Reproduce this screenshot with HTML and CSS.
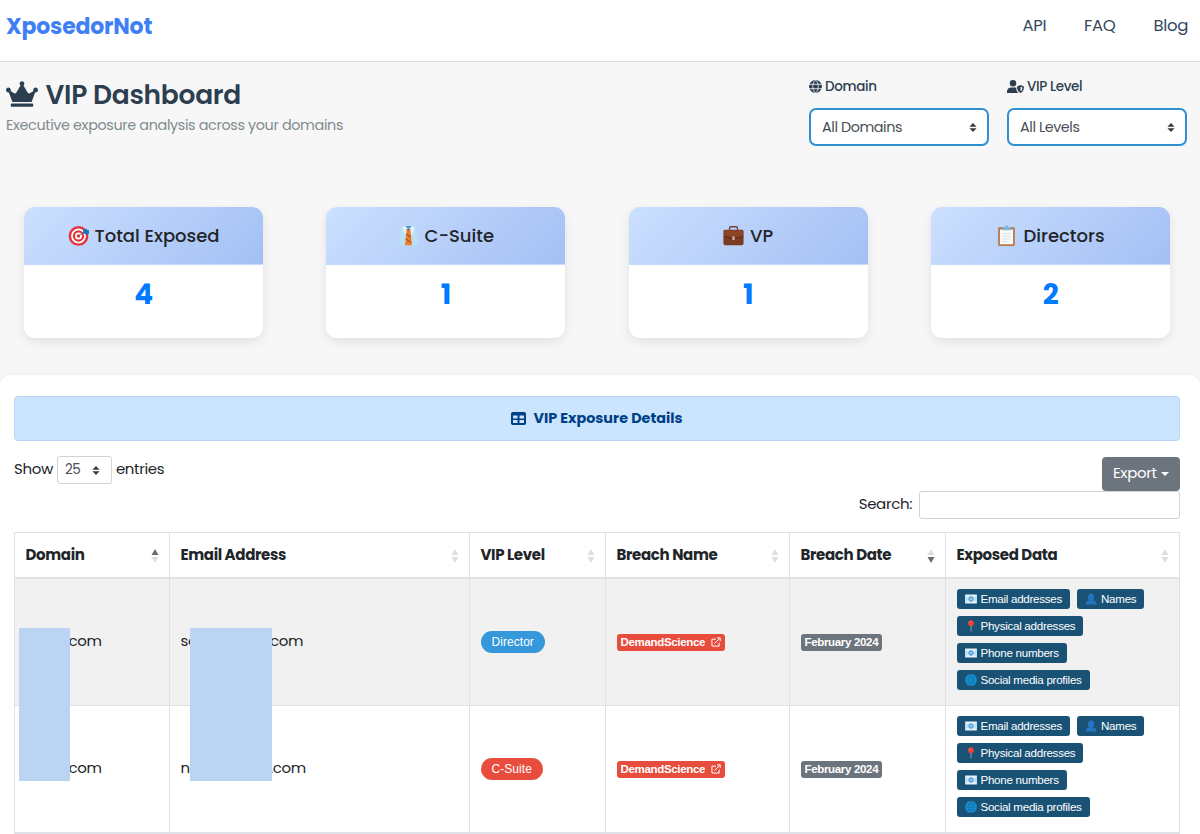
FILE: index.html
```html
<!DOCTYPE html>
<html lang="en">
<head>
<meta charset="utf-8">
<title>VIP Dashboard</title>
<link rel="stylesheet" href="styles.css">
</head>
<body>
<svg class="defs" width="0" height="0">
  <symbol id="mail" viewBox="0 0 24 20">
    <rect x="0" y="1" width="24" height="18" rx="1.5" fill="#e6f2fa"/>
    <path d="M0 1l8 9-8 9zM24 1l-8 9 8 9z" fill="#c3e0f3"/>
    <circle cx="12" cy="10" r="4" fill="none" stroke="#4f9fdb" stroke-width="2.600"/>
    <path d="M9 10h6" stroke="#4f9fdb" stroke-width="2"/>
  </symbol>
  <symbol id="person" viewBox="0 0 24 24">
    <ellipse cx="12" cy="8.500" rx="6" ry="7.500" fill="#2474c4"/>
    <path d="M1 23c0-6 4-7.500 8-8h6c4 .5 8 2 8 8z" fill="#2474c4"/>
  </symbol>
  <symbol id="pin" viewBox="0 0 24 24">
    <path d="M11 11h2l-.4 12h-1.200z" fill="#9bb0bd"/>
    <circle cx="12" cy="6.500" r="5.800" fill="#e8403a"/>
    <circle cx="10.200" cy="4.500" r="1.500" fill="#ff8a80"/>
  </symbol>
  <symbol id="world" viewBox="0 0 24 24">
    <circle cx="12" cy="12" r="11.800" fill="#1a93d8"/>
    <path d="M12 .5v23M.5 12h23M3 6.500h18M3 17.500h18M12 .5C4.500 6 4.500 18 12 23.500 19.500 18 19.500 6 12 .5" fill="none" stroke="#11699f" stroke-width="1.200"/>
  </symbol>
  <symbol id="external" viewBox="0 0 16 16">
    <path d="M8 3.500H1.500v11H13V9M5.500 10.500L14 2M9.500 1.300h5.200v5.200" fill="none" stroke="#fff" stroke-width="1.600"/>
  </symbol>
  <symbol id="updown" viewBox="0 0 8 10">
    <path d="M4 0l4 4.200H0zM4 10L0 5.800h8z" fill="#343a40"/>
  </symbol>
  <symbol id="sort" viewBox="0 0 8 14">
    <path class="up" d="M4 0l3.500 6h-7z"/>
    <path class="down" d="M4 14L.5 8h7z"/>
  </symbol>
</svg>

<header class="topbar">
  <a class="brand">XposedorNot</a>
  <nav class="nav"><a>API</a><a>FAQ</a><a>Blog</a></nav>
</header>

<section class="hero">
  <div class="heading">
    <h1 class="title">
      <svg class="crown" viewBox="0 0 640 512"><path fill="currentColor" d="M528 448H112c-8.800 0-16 7.200-16 16v32c0 8.800 7.200 16 16 16h416c8.800 0 16-7.200 16-16v-32c0-8.800-7.200-16-16-16zm64-320c-26.500 0-48 21.500-48 48 0 7.100 1.600 13.700 4.400 19.800L476 239.200c-15.400 9.200-35.300 4-44.200-11.600L350.300 85C361 76.200 368 63 368 48c0-26.500-21.500-48-48-48s-48 21.500-48 48c0 15 7 28.200 17.700 37l-81.500 142.600c-8.900 15.600-28.900 20.800-44.200 11.600l-72.300-43.400c2.700-6 4.400-12.700 4.400-19.800 0-26.500-21.500-48-48-48S0 149.500 0 176s21.500 48 48 48c2.600 0 5.200-.4 7.700-.8L128 416h384l72.300-192.800c2.500.4 5.100.8 7.700.8 26.500 0 48-21.500 48-48s-21.500-48-48-48z"/></svg>
      <span>VIP Dashboard</span>
    </h1>
    <p class="subtitle">Executive exposure analysis across your domains</p>
  </div>
  <div class="filters">
    <div class="filter">
      <label class="filter-label">
        <svg width="13" height="13" viewBox="0 0 16 16"><circle cx="8" cy="8" r="8" fill="#2c3e50"/><path d="M0 5.300h16M0 10.700h16M8 0C3.500 4 3.500 12 8 16 12.500 12 12.500 4 8 0" fill="none" stroke="#f7f7f7" stroke-width="1"/></svg>
        <span>Domain</span>
      </label>
      <div class="select"><span>All Domains</span><svg width="8" height="9"><use href="#updown"/></svg></div>
    </div>
    <div class="filter">
      <label class="filter-label">
        <svg width="17" height="13" viewBox="0 0 34 26"><circle cx="12" cy="6.500" r="6.500" fill="#2c3e50"/><path d="M0 26v-3c0-5 4-8 8-8h8c1 0 1.700.1 2.500.3 0 4.500 1 8 4 10.700z" fill="#2c3e50"/><path d="M27 10l7 2.800c0 6.500-2 10.800-7 13.200-5-2.400-7-6.700-7-13.200z" fill="#2c3e50"/><path d="M27 13.500v9.300c2.700-1.500 4-4 4.200-7.600z" fill="#f7f7f7"/></svg>
        <span>VIP Level</span>
      </label>
      <div class="select"><span>All Levels</span><svg width="8" height="9"><use href="#updown"/></svg></div>
    </div>
  </div>
</section>

<section class="stats">
  <article class="stat">
    <h2 class="stat-head">
      <svg width="21" height="21" viewBox="0 0 24 24"><circle cx="12" cy="12.500" r="11.300" fill="#e5323b"/><circle cx="12" cy="12.500" r="8.500" fill="#fff"/><circle cx="12" cy="12.500" r="6.500" fill="#e5323b"/><circle cx="12" cy="12.500" r="4" fill="#fff"/><circle cx="12" cy="12.500" r="2" fill="#e5323b"/><path d="M12 12.500l7-5" stroke="#5b6670" stroke-width="1"/><path d="M17 9l.5-4 3.500-1 .5 1.500L24 6v4l-3 1z" fill="#1976b8"/></svg>
      <span>Total Exposed</span>
    </h2>
    <div class="stat-value">4</div>
  </article>
  <article class="stat">
    <h2 class="stat-head">
      <svg width="21" height="21" viewBox="0 0 24 24"><path d="M3 3l6-2h6l6 2 2 20H1z" fill="#b9e0f5"/><path d="M8 1l4 5-4 5-3-8zM16 1l-4 5 4 5 3-8z" fill="#e3f4fd"/><path d="M8.500 1h7L12 5z" fill="#4a9bc4"/><path d="M10 5h4l.6 4.500L16 23H8l1.400-13.500z" fill="#ef7d24"/><path d="M9.300 10l5 4M9 16l6 4M10 5.500h4" stroke="#a34f38" stroke-width="1.200"/></svg>
      <span>C-Suite</span>
    </h2>
    <div class="stat-value">1</div>
  </article>
  <article class="stat">
    <h2 class="stat-head">
      <svg width="21" height="21" viewBox="0 0 24 24"><path d="M7.500 6V3.500Q7.500 2 9 2h6q1.500 0 1.500 1.500V6" fill="none" stroke="#6d4038" stroke-width="1.500"/><rect x=".5" y="5.500" width="23" height="17.500" rx="1.800" fill="#7c3a22"/><path d="M1 6h22v6.500L12 15 1 12.500z" fill="#8a4428"/><path d="M1 13l11 2.500L23 13" fill="none" stroke="#542719"/><rect x="10.800" y="13" width="2.400" height="4" rx=".5" fill="#d6c3b5"/></svg>
      <span>VP</span>
    </h2>
    <div class="stat-value">1</div>
  </article>
  <article class="stat">
    <h2 class="stat-head">
      <svg width="21" height="21" viewBox="0 0 24 24"><rect x="2.500" y="2.500" width="19" height="21.500" rx="1.300" fill="#bb7547"/><path d="M4.500 5h15v17h-15z" fill="#f8fafb"/><path d="M7 10h10M7 13h10M7 16h10M7 19h7" stroke="#d5dfe6"/><path d="M7 2.500h3a2 2 0 0 1 4 0h3V6H7z" fill="#7db8d8"/></svg>
      <span>Directors</span>
    </h2>
    <div class="stat-value">2</div>
  </article>
</section>

<main class="panel">
  <div class="banner">
    <svg width="15" height="13" viewBox="0 0 30 26"><rect width="30" height="26" rx="3.500" fill="#004085"/><path d="M4 7h9v6H4zM17 7h9v6h-9zM4 16h9v6H4zM17 16h9v6h-9z" fill="#cce5ff"/></svg>
    <span>VIP Exposure Details</span>
  </div>

  <div class="tools">
    <div class="length"><span>Show</span><div class="length-select"><span>25</span><svg width="8" height="9"><use href="#updown"/></svg></div><span>entries</span></div>
    <div class="actions">
      <button class="export"><span>Export</span><i class="caret"></i></button>
      <label class="search"><span>Search:</span><input type="text" class="search-input"></label>
    </div>
  </div>

  <div class="table-wrap">
    <table class="table">
      <colgroup><col class="c1"><col class="c2"><col class="c3"><col class="c4"><col class="c5"><col class="c6"></colgroup>
      <thead>
        <tr>
          <th><div class="th asc"><span>Domain</span><svg width="8" height="14"><use href="#sort"/></svg></div></th>
          <th><div class="th"><span>Email Address</span><svg width="8" height="14"><use href="#sort"/></svg></div></th>
          <th><div class="th"><span>VIP Level</span><svg width="8" height="14"><use href="#sort"/></svg></div></th>
          <th><div class="th"><span>Breach Name</span><svg width="8" height="14"><use href="#sort"/></svg></div></th>
          <th><div class="th desc"><span>Breach Date</span><svg width="8" height="14"><use href="#sort"/></svg></div></th>
          <th><div class="th"><span>Exposed Data</span><svg width="8" height="14"><use href="#sort"/></svg></div></th>
        </tr>
      </thead>
      <tbody>
        <tr class="odd">
          <td><span class="domain-tail">com</span></td>
          <td><div class="email"><span class="mail-start">se</span><span>com</span></div></td>
          <td><span class="pill blue">Director</span></td>
          <td><span class="badge red">DemandScience<svg width="10" height="10"><use href="#external"/></svg></span></td>
          <td><span class="badge grey">February 2024</span></td>
          <td><div class="tags">
            <span class="tag"><svg><use href="#mail"/></svg>Email addresses</span><span class="tag"><svg><use href="#person"/></svg>Names</span>
            <span class="tag"><svg><use href="#pin"/></svg>Physical addresses</span>
            <span class="tag"><svg><use href="#mail"/></svg>Phone numbers</span>
            <span class="tag"><svg><use href="#world"/></svg>Social media profiles</span>
          </div></td>
        </tr>
        <tr>
          <td><span class="domain-tail">com</span></td>
          <td><div class="email"><span class="mail-start">n</span><span>.com</span></div></td>
          <td><span class="pill crimson">C-Suite</span></td>
          <td><span class="badge red">DemandScience<svg width="10" height="10"><use href="#external"/></svg></span></td>
          <td><span class="badge grey">February 2024</span></td>
          <td><div class="tags">
            <span class="tag"><svg><use href="#mail"/></svg>Email addresses</span><span class="tag"><svg><use href="#person"/></svg>Names</span>
            <span class="tag"><svg><use href="#pin"/></svg>Physical addresses</span>
            <span class="tag"><svg><use href="#mail"/></svg>Phone numbers</span>
            <span class="tag"><svg><use href="#world"/></svg>Social media profiles</span>
          </div></td>
        </tr>
      </tbody>
    </table>
    <div class="mask mask-domain"></div>
    <div class="mask mask-email"></div>
  </div>
</main>
</body>
</html>
```
FILE: styles.css
```css
* { box-sizing: border-box; }
body {
  margin: 0;
  height: 834px;
  overflow: hidden;
  background: #f7f7f7;
  color: #212529;
  font-family: Poppins, Inter, "Open Sans", sans-serif;
  font-size: 15px;
  line-height: 1.5;
  letter-spacing: -.35px;
}
h1, h2, p { margin: 0; }
svg { display: block; flex: none; }
span { white-space: nowrap; }
.defs { position: absolute; }

.topbar {
  display: flex;
  justify-content: space-between;
  height: 61.500px;
  padding: 10px 12px 0 6px;
  background: #fff;
  border-bottom: 1.500px solid #dedede;
}
.brand { font-size: 22px; line-height: 33px; font-weight: 700; letter-spacing: -.2px; color: #3f7ff5; }
.nav { display: flex; gap: 38px; font-size: 16.500px; line-height: 32px; color: #34495e; }

.hero {
  display: flex;
  justify-content: space-between;
  height: 145.500px;
  padding: 15.500px 13px 0 6px;
  color: #2c3e50;
}
.title { display: flex; align-items: center; gap: 7.500px; height: 35px; font-size: 26.500px; font-weight: 600; letter-spacing: -.28px; }
.crown { width: 32px; height: 26px; margin-top: -2px; }
.subtitle { margin-top: 2px; font-size: 14.400px; line-height: 22px; letter-spacing: -.37px; color: #7f8c8d; }
.filters { display: flex; gap: 18px; }
.filter { width: 180px; }
.filter-label { display: flex; align-items: center; gap: 3px; height: 20px; font-size: 13.500px; font-weight: 500; }
.filter-label svg { margin-top: -2px; }
.select {
  display: flex;
  align-items: center;
  justify-content: space-between;
  height: 38px;
  margin-top: 11px;
  padding: 1px 10px 0 11px;
  background: #fff;
  border: 2px solid #2f8fd0;
  border-radius: 7px;
  color: #495057;
  font-size: 14.400px;
  letter-spacing: -.43px;
}

.stats { display: grid; grid-template-columns: repeat(4, 239px); justify-content: space-between; height: 168px; padding: 0 30px 0 24px; }
.stat { height: 131px; background: #fff; border-radius: 11px; overflow: hidden; box-shadow: 0 4px 11px rgba(0, 0, 0, .09); }
.stat-head {
  display: flex;
  align-items: center;
  justify-content: center;
  gap: 6px;
  height: 58px;
  background: linear-gradient(135deg, #cce0ff, #a3bff4);
  border-bottom: 1px solid #c4dcfb;
  font-size: 18px;
  font-weight: 500;
  letter-spacing: 0;
}
.stat-value { padding-top: 8px; text-align: center; font-size: 28px; line-height: 44px; font-weight: 700; color: #007bff; }

.panel { height: 470px; padding: 21px 20px 0 14px; background: #fff; border-radius: 11px; box-shadow: 0 0 5px rgba(0, 0, 0, .05); }
.banner {
  display: flex;
  align-items: center;
  justify-content: center;
  gap: 7px;
  height: 45px;
  background: #cce5ff;
  border: 1px solid #b8d5f5;
  border-radius: 4px;
  color: #004085;
  font-size: 14.400px;
  font-weight: 700;
  letter-spacing: 0;
}
.tools { display: flex; justify-content: space-between; height: 91px; padding-top: 15px; }
.length { display: flex; align-items: center; height: 28px; gap: 4px; }
.length > span { margin-top: -2px; }
.length-select {
  display: flex;
  align-items: center;
  justify-content: space-between;
  width: 55px;
  height: 28px;
  padding: 0 11px 0 7px;
  border: 1px solid #ced4da;
  border-radius: 3px;
  color: #495057;
  font-size: 13.500px;
}
.actions { display: flex; flex-direction: column; align-items: flex-end; padding-top: 1px; }
.export {
  display: flex;
  align-items: center;
  justify-content: space-between;
  width: 78px;
  height: 34px;
  padding: 0 11px 1px;
  border: 0;
  border-radius: 4px;
  background: #6c757d;
  color: #fff;
  font: inherit;
  letter-spacing: -.35px;
}
.caret { border: 4px solid transparent; border-top-color: #fff; border-bottom: 0; }
.search { display: flex; align-items: center; gap: 7px; height: 28px; }
.search span { margin-top: -2px; }
.search-input { width: 261px; height: 28px; border: 1px solid #ced4da; border-radius: 3px; background: #fff; }

.table-wrap { position: relative; }
.table { width: 1165px; table-layout: fixed; border-collapse: collapse; }
.c1 { width: 155px; } .c2 { width: 300px; } .c3 { width: 136px; }
.c4 { width: 184px; } .c5 { width: 156px; } .c6 { width: 234px; }
th, td { border: 1px solid #dee2e6; padding: 0 10.500px; text-align: left; }
th { height: 45px; border-bottom-width: 2px; }
td { height: 127.500px; }
tbody tr:last-child td { border-bottom-width: 2px; }
.odd { background: #f1f1f1; }
.th { display: flex; justify-content: space-between; align-items: center; height: 43px; font-weight: 700; }
.th svg { margin-top: 2px; }
.asc { --up: #6c6c6c; }
.desc { --down: #6c6c6c; }
.up { fill: var(--up, #dedede); }
.down { fill: var(--down, #dedede); }
.email { display: flex; }
.domain-tail { margin-left: 43px; }
.mail-start { width: 89.500px; }

.pill, .badge, .tag { font-family: "Liberation Sans", Arial, sans-serif; color: #fff; }
.pill { display: inline-flex; align-items: center; height: 22.500px; padding: 0 11px; border-radius: 12px; font-size: 12px; letter-spacing: .05px; vertical-align: middle; }
.blue { background: #3498db; }
.crimson { background: #e74c3c; }
.badge { display: inline-flex; align-items: center; height: 17px; padding: 0 4px; border-radius: 3px; font-size: 11.500px; font-weight: 700; letter-spacing: -.33px; vertical-align: middle; }
.badge svg { margin-left: 6px; }
.red { background: #e74c3c; }
.grey { background: #6c757d; }
.tags { display: flex; flex-wrap: wrap; gap: 7px; padding-bottom: 4px; }
.tag { display: inline-flex; align-items: center; gap: 4px; height: 20px; padding: 0 8px; border-radius: 3px; background: #1a5276; font-size: 11.600px; letter-spacing: -.28px; }
.tag svg { width: 12px; height: 12px; }

.mask { position: absolute; top: 96px; height: 153px; background: #bbd4f4; }
.mask-domain { left: 5px; width: 51px; }
.mask-email { left: 176px; width: 82px; }
```
